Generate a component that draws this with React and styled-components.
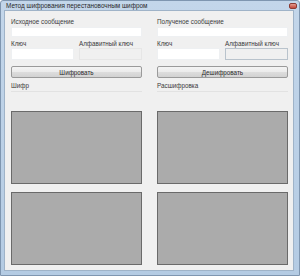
import React from 'react';
import styled, { createGlobalStyle } from 'styled-components';

const Global = createGlobalStyle`
  html, body { margin: 0; padding: 0; background: #ffffff; }
  body { font-family: "Liberation Sans", Arial, sans-serif; }
`;

const Window = styled.div`
  width: 300px;
  height: 276px;
  box-sizing: border-box;
  display: flex;
  flex-direction: column;
  padding: 0 5px 4px 3px;
  background: linear-gradient(180deg, #c3d6ea 0%, #b4cbe3 100%);
  border: 1px solid #7f96b0;
  border-radius: 3px 3px 0 0;
`;

const TitleBar = styled.div`
  height: 9px;
  display: flex;
  align-items: center;
  justify-content: space-between;
  font-size: 6.4px;
  color: #2a2a2a;
  padding-left: 2px;
`;

const Close = styled.div`
  width: 8px;
  height: 6px;
  margin-right: -3px;
  margin-top: 1px;
  border-radius: 2px;
  background: linear-gradient(180deg, #e39b8f 0%, #c2473a 100%);
  border: 1px solid #8e3a32;
  box-sizing: border-box;
`;

const Client = styled.div`
  flex: 1;
  background: #f0f0f0;
  border: 1px solid #9fb3c8;
  display: flex;
  gap: 15px;
  padding-left: 6px;
`;

const Column = styled.div`
  width: 131px;
  display: flex;
  flex-direction: column;
`;

const Label = styled.div`
  height: 8px;
  line-height: 8px;
  font-size: 6.3px;
  color: #3a3a3a;
  margin-top: ${p => p.$top || 0}px;
  white-space: nowrap;
`;

const TextBox = styled.div`
  height: ${p => p.$h || 11}px;
  box-sizing: border-box;
  background: ${p => (p.$disabled ? '#f0f0f0' : '#ffffff')};
  border: 1px solid ${p => (p.$disabled ? p.$faint ? '#e6e6e6' : '#b9c3cc' : '#eef0f2')};
  margin-top: ${p => p.$top || 0}px;
`;

const Pair = styled.div`
  display: flex;
  gap: 5px;
  & > * { flex: 1; }
`;

const Button = styled.div`
  height: 12px;
  margin-top: 6px;
  box-sizing: border-box;
  border: 1px solid #9a9a9a;
  border-radius: 2px;
  background: linear-gradient(180deg, #f4f4f4 0%, #ebebeb 50%, #dddddd 51%, #d2d2d2 100%);
  display: flex;
  align-items: center;
  justify-content: center;
  font-size: 6.3px;
  color: #2a2a2a;
`;

const Rule = styled.div`
  height: 1px;
  margin-top: 1px;
  background: #e2e2e2;
`;

const Canvas = styled.div`
  height: 73px;
  box-sizing: border-box;
  margin-top: ${p => p.$top}px;
  background: #ababab;
  border: 1px solid #6a6a6a;
`;

const Side = ({ title, keyFaint, action, output }) => (
  <Column>
    <Label $top={7}>{title}</Label>
    <TextBox $h={10} $top={1} />
    <Pair>
      <Label $top={3}>Ключ</Label>
      <Label $top={3}>Алфавитный ключ</Label>
    </Pair>
    <Pair>
      <TextBox $h={12} />
      <TextBox $h={12} $disabled $faint={keyFaint} />
    </Pair>
    <Button>{action}</Button>
    <Label $top={4}>{output}</Label>
    <Rule />
    <Canvas $top={19} />
    <Canvas $top={8} />
  </Column>
);

export default function App() {
  return (
    <>
      <Global />
      <Window>
        <TitleBar>
          <span>Метод шифрования перестановочным шифром</span>
          <Close />
        </TitleBar>
        <Client>
          <Side title="Исходное сообщение" keyFaint action="Шифровать" output="Шифр" />
          <Side title="Полученое сообщение" action="Дешифровать" output="Расшифровка" />
        </Client>
      </Window>
    </>
  );
}
